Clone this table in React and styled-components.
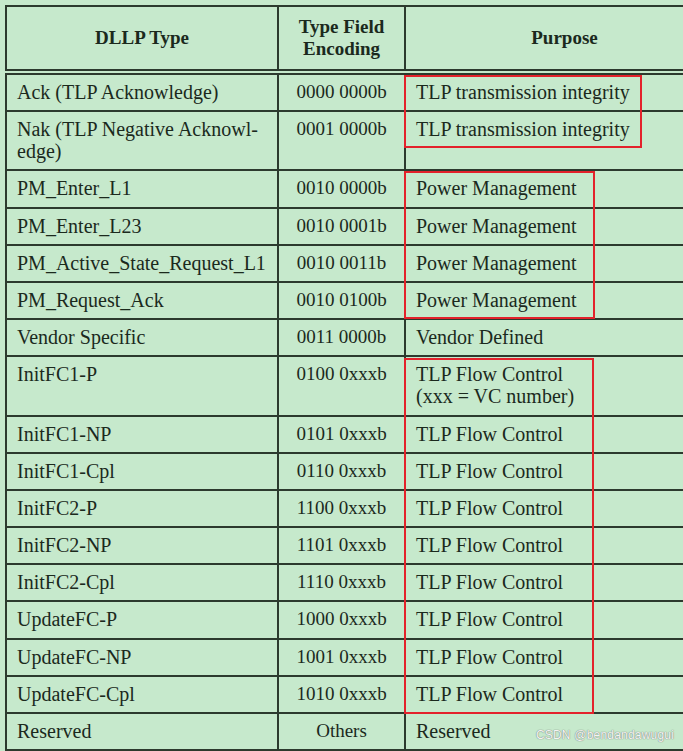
import React from 'react';
import styled, { createGlobalStyle } from 'styled-components';

const GlobalStyle = createGlobalStyle`
  html, body {
    margin: 0;
    padding: 0;
    background: #d9eedc;
    overflow: hidden;
  }
`;

const Frame = styled.div`
  position: relative;
  padding: 5px 0 0 5px;
  width: 683px;
  height: 751px;
  box-sizing: border-box;
  overflow: hidden;
  background: #c6e9cc;
`;

const Table = styled.table`
  border-collapse: collapse;
  table-layout: fixed;
  width: 720px;
  font-family: 'Liberation Serif', 'DejaVu Serif', serif;
  font-size: 20px;
  line-height: 22px;
  color: #1b291d;
  background: #c6e9cc;

  & td,
  & th {
    border: 2px solid #2c3a2e;
  }
`;

const HeadCell = styled.th`
  height: 62px;
  padding: 0 8px;
  font-size: 19px;
  font-weight: 700;
  text-align: center;
  vertical-align: middle;
  border-bottom: 6px double #2c3a2e !important;
`;

const Cell = styled.td`
  padding: 6px 10px 7.2px;
  font-size: ${(p) => (p.$center ? '19px' : '20px')};
  text-align: ${(p) => (p.$center ? 'center' : 'left')};
  vertical-align: top;
  white-space: nowrap;
`;

const RedBox = styled.div`
  position: absolute;
  border: 2px solid #e3222b;
  pointer-events: none;
`;

const Watermark = styled.div`
  position: absolute;
  right: 9px;
  bottom: 9px;
  font-family: 'Liberation Sans', Arial, sans-serif;
  font-size: 12px;
  color: #f4f4f4;
  text-shadow: 0 0 1px #7c857d, 0 0 1px #7c857d;
  letter-spacing: 0.2px;
`;

const rows = [
  ['Ack (TLP Acknowledge)', '0000 0000b', 'TLP transmission integrity'],
  ['Nak (TLP Negative Acknowl-\nedge)', '0001 0000b', 'TLP transmission integrity'],
  ['PM_Enter_L1', '0010 0000b', 'Power Management'],
  ['PM_Enter_L23', '0010 0001b', 'Power Management'],
  ['PM_Active_State_Request_L1', '0010 0011b', 'Power Management'],
  ['PM_Request_Ack', '0010 0100b', 'Power Management'],
  ['Vendor Specific', '0011 0000b', 'Vendor Defined'],
  ['InitFC1-P', '0100 0xxxb', 'TLP Flow Control\n(xxx = VC number)'],
  ['InitFC1-NP', '0101 0xxxb', 'TLP Flow Control'],
  ['InitFC1-Cpl', '0110 0xxxb', 'TLP Flow Control'],
  ['InitFC2-P', '1100 0xxxb', 'TLP Flow Control'],
  ['InitFC2-NP', '1101 0xxxb', 'TLP Flow Control'],
  ['InitFC2-Cpl', '1110 0xxxb', 'TLP Flow Control'],
  ['UpdateFC-P', '1000 0xxxb', 'TLP Flow Control'],
  ['UpdateFC-NP', '1001 0xxxb', 'TLP Flow Control'],
  ['UpdateFC-Cpl', '1010 0xxxb', 'TLP Flow Control'],
  ['Reserved', 'Others', 'Reserved'],
];

const lines = (text) =>
  text.split('\n').map((t, i) => (
    <React.Fragment key={i}>
      {i > 0 && <br />}
      {t}
    </React.Fragment>
  ));

export default function App() {
  return (
    <>
      <GlobalStyle />
      <Frame>
        <Table>
          <colgroup>
            <col style={{ width: 272 }} />
            <col style={{ width: 127 }} />
            <col />
          </colgroup>
          <thead>
            <tr>
              <HeadCell>DLLP Type</HeadCell>
              <HeadCell>
                Type Field
                <br />
                Encoding
              </HeadCell>
              <HeadCell>Purpose</HeadCell>
            </tr>
          </thead>
          <tbody>
            {rows.map(([type, code, purpose]) => (
              <tr key={type}>
                <Cell>{lines(type)}</Cell>
                <Cell $center>{code}</Cell>
                <Cell>{lines(purpose)}</Cell>
              </tr>
            ))}
          </tbody>
        </Table>

        {/* annotations */}
        <RedBox style={{ left: 404, top: 75, width: 234, height: 69 }} />
        <RedBox style={{ left: 404, top: 171, width: 187, height: 144 }} />
        <RedBox style={{ left: 404, top: 358, width: 186, height: 352 }} />
        <Watermark>CSDN @bendandawugui</Watermark>
      </Frame>
    </>
  );
}
